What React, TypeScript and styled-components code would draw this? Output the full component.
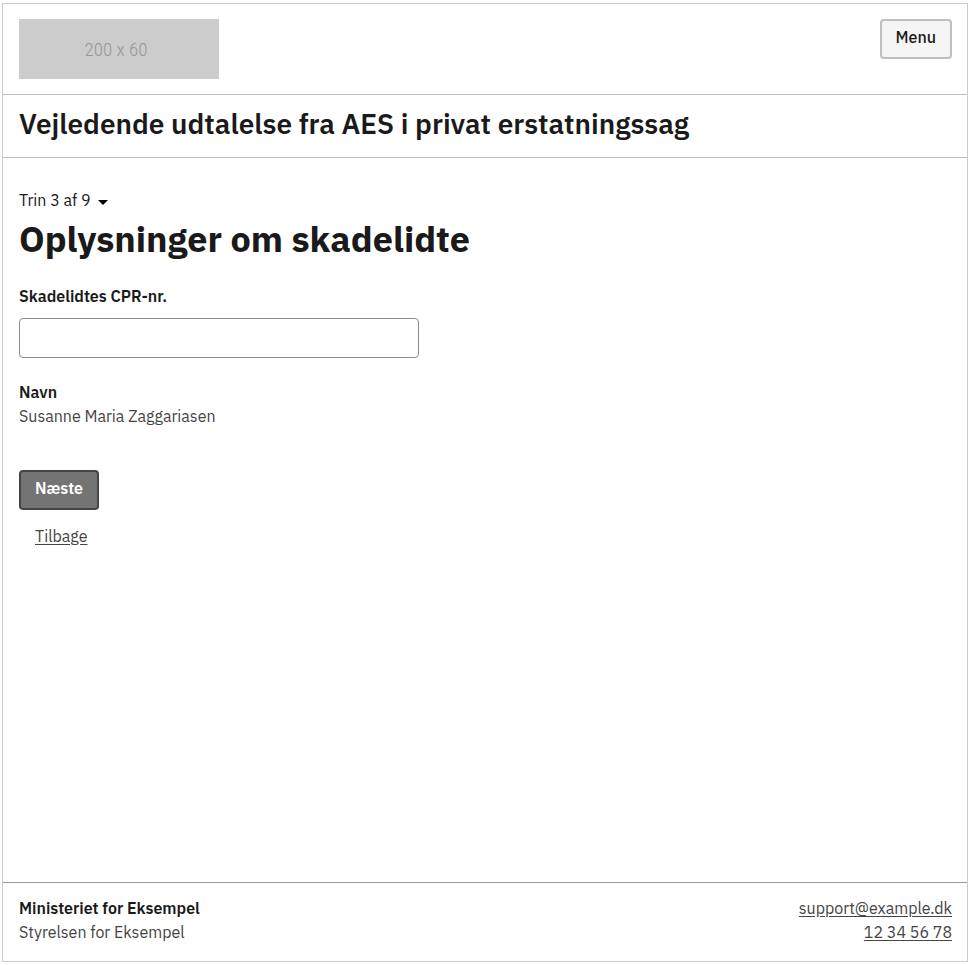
import React from "react";
import styled, { createGlobalStyle } from "styled-components";

const color = {
  text: "#1a1a1a",
  muted: "#454545",
  frame: "#cccccc",
  rule: "#bfbfbf",
  strongRule: "#999999",
  primary: "#747474",
};

const GlobalStyle = createGlobalStyle`
  *, *::before, *::after { box-sizing: border-box; }
  body {
    margin: 0;
    background: #ffffff;
    color: ${color.text};
    font-family: "IBM Plex Sans", "Noto Sans", "Open Sans", sans-serif;
    font-size: 16px;
    line-height: 24px;
  }
  h1, p { margin: 0; }
  button, input { font: inherit; color: inherit; }
`;

const Page = styled.div`
  display: flex;
  flex-direction: column;
  min-height: calc(100vh - 6px);
  margin: 3px 3px 3px 2px;
  border: 1px solid ${color.frame};
`;

const Header = styled.header`
  display: flex;
  justify-content: space-between;
  align-items: flex-start;
  padding: 15px 15px 15px 16px;
  border-bottom: 1px solid ${color.rule};
`;

const Logo = styled.div`
  display: flex;
  align-items: center;
  justify-content: center;
  width: 200px;
  height: 60px;
  padding: 2px 6px 0 0;
  background: #cccccc;
  color: #969696;
  font-family: "Roboto Condensed", "Arial Narrow", Roboto, sans-serif;
  font-size: 19px;
  font-weight: 300;
`;

const Button = styled.button<{ $primary?: boolean }>`
  height: 40px;
  padding: 0 14px 4px;
  border: 2px solid ${(p) => (p.$primary ? color.muted : color.rule)};
  border-radius: 4px;
  background: ${(p) => (p.$primary ? color.primary : "#f5f5f5")};
  color: ${(p) => (p.$primary ? "#ffffff" : color.text)};
  font-weight: ${(p) => (p.$primary ? 600 : 500)};
  cursor: pointer;
`;

const SolutionBar = styled.div`
  padding: 11px 16px 15px;
  border-bottom: 1px solid ${color.rule};
`;

const SolutionTitle = styled.p`
  font-size: 28px;
  line-height: 36px;
  font-weight: 600;
`;

const Main = styled.main`
  flex: 1;
  display: flex;
  flex-direction: column;
  align-items: flex-start;
  padding: 30px 16px;
`;

const StepButton = styled.button`
  display: flex;
  align-items: center;
  gap: 7px;
  padding: 0;
  border: 0;
  background: none;
  font-weight: 400;
  cursor: pointer;
`;

const Caret = styled.svg`
  margin-top: 4px;
`;

const Heading = styled.h1`
  margin: 3px 0 21px;
  font-size: 36px;
  line-height: 48px;
  font-weight: 700;
`;

const Label = styled.label`
  font-weight: 600;
`;

const TextInput = styled.input`
  width: 400px;
  max-width: 100%;
  height: 40px;
  margin: 10px 0 22px;
  padding: 0 16px;
  border: 1px solid #8c8c8c;
  border-radius: 4px;
  background: #ffffff;
`;

const Strong = styled.p`
  font-weight: 600;
`;

const Muted = styled.p`
  color: ${color.muted};
`;

const Actions = styled.div`
  display: flex;
  flex-direction: column;
  align-items: flex-start;
  gap: 14px;
  margin-top: 42px;
`;

const Link = styled.a<{ $inset?: boolean }>`
  margin-left: ${(p) => (p.$inset ? "16px" : "0")};
  color: ${color.muted};
  text-underline-offset: 2px;
`;

const Footer = styled.footer`
  display: flex;
  justify-content: space-between;
  padding: 13px 15px 17px 16px;
  border-top: 1px solid ${color.strongRule};
`;

const Contact = styled.address`
  display: flex;
  flex-direction: column;
  align-items: flex-end;
  font-style: normal;
`;

export default function App() {
  return (
    <>
      <GlobalStyle />
      <Page>
        <Header>
          <Logo>200 x 60</Logo>
          <Button type="button">Menu</Button>
        </Header>
        <SolutionBar>
          <SolutionTitle>Vejledende udtalelse fra AES i privat erstatningssag</SolutionTitle>
        </SolutionBar>
        <Main>
          <StepButton type="button">
            Trin 3 af 9
            <Caret width="10" height="5" viewBox="0 0 10 5" aria-hidden="true">
              <path d="M0 0h10L5 5z" fill="#000000" />
            </Caret>
          </StepButton>
          <Heading>Oplysninger om skadelidte</Heading>
          <Label htmlFor="cpr">Skadelidtes CPR-nr.</Label>
          <TextInput id="cpr" type="text" />
          <Strong>Navn</Strong>
          <Muted>Susanne Maria Zaggariasen</Muted>
          <Actions>
            <Button type="button" $primary>
              Næste
            </Button>
            <Link href="#tilbage" $inset>
              Tilbage
            </Link>
          </Actions>
        </Main>
        <Footer>
          <div>
            <Strong>Ministeriet for Eksempel</Strong>
            <Muted>Styrelsen for Eksempel</Muted>
          </div>
          <Contact>
            <Link href="mailto:support@example.dk">support@example.dk</Link>
            <Link href="tel:12345678">12 34 56 78</Link>
          </Contact>
        </Footer>
      </Page>
    </>
  );
}
